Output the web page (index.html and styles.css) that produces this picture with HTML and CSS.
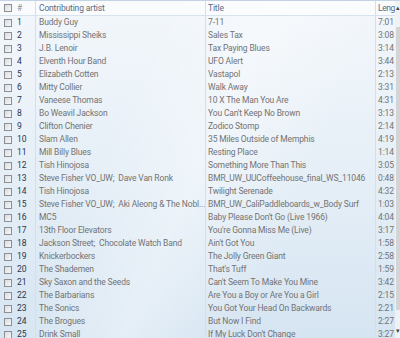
FILE: index.html
```html
<!DOCTYPE html>
<html>
<head>
<meta charset="utf-8">
<link rel="stylesheet" href="styles.css">
</head>
<body>
<div class="pane">
  <div class="list">
    <div class="row head">
      <div class="c-chk"><span class="box"></span></div>
      <div class="c-num">#</div>
      <div class="c-art">Contributing artist</div>
      <div class="c-tit">Title</div>
      <div class="c-len">Leng</div>
    </div>
    <div class="row"><div class="c-chk"><span class="box"></span></div><div class="c-num">1</div><div class="c-art">Buddy Guy</div><div class="c-tit">7-11</div><div class="c-len">7:01</div></div>
    <div class="row"><div class="c-chk"><span class="box"></span></div><div class="c-num">2</div><div class="c-art">Mississippi Sheiks</div><div class="c-tit">Sales Tax</div><div class="c-len">3:08</div></div>
    <div class="row"><div class="c-chk"><span class="box"></span></div><div class="c-num">3</div><div class="c-art">J.B. Lenoir</div><div class="c-tit">Tax Paying Blues</div><div class="c-len">3:14</div></div>
    <div class="row"><div class="c-chk"><span class="box"></span></div><div class="c-num">4</div><div class="c-art">Elventh Hour Band</div><div class="c-tit">UFO Alert</div><div class="c-len">3:44</div></div>
    <div class="row"><div class="c-chk"><span class="box"></span></div><div class="c-num">5</div><div class="c-art">Elizabeth Cotten</div><div class="c-tit">Vastapol</div><div class="c-len">2:13</div></div>
    <div class="row"><div class="c-chk"><span class="box"></span></div><div class="c-num">6</div><div class="c-art">Mitty Collier</div><div class="c-tit">Walk Away</div><div class="c-len">3:31</div></div>
    <div class="row"><div class="c-chk"><span class="box"></span></div><div class="c-num">7</div><div class="c-art">Vaneese Thomas</div><div class="c-tit">10 X The Man You Are</div><div class="c-len">4:31</div></div>
    <div class="row"><div class="c-chk"><span class="box"></span></div><div class="c-num">8</div><div class="c-art">Bo Weavil Jackson</div><div class="c-tit">You Can't Keep No Brown</div><div class="c-len">3:13</div></div>
    <div class="row"><div class="c-chk"><span class="box"></span></div><div class="c-num">9</div><div class="c-art">Clifton Chenier</div><div class="c-tit">Zodico Stomp</div><div class="c-len">2:14</div></div>
    <div class="row"><div class="c-chk"><span class="box"></span></div><div class="c-num">10</div><div class="c-art">Slam Allen</div><div class="c-tit">35 Miles Outside of Memphis</div><div class="c-len">4:19</div></div>
    <div class="row"><div class="c-chk"><span class="box"></span></div><div class="c-num">11</div><div class="c-art">Mill Billy Blues</div><div class="c-tit">Resting Place</div><div class="c-len">1:14</div></div>
    <div class="row"><div class="c-chk"><span class="box"></span></div><div class="c-num">12</div><div class="c-art">Tish Hinojosa</div><div class="c-tit">Something More Than This</div><div class="c-len">3:05</div></div>
    <div class="row"><div class="c-chk"><span class="box"></span></div><div class="c-num">13</div><div class="c-art">Steve Fisher VO_UW;&nbsp; Dave Van Ronk</div><div class="c-tit">BMR_UW_UUCoffeehouse_final_WS_11046</div><div class="c-len">0:48</div></div>
    <div class="row"><div class="c-chk"><span class="box"></span></div><div class="c-num">14</div><div class="c-art">Tish Hinojosa</div><div class="c-tit">Twilight Serenade</div><div class="c-len">4:32</div></div>
    <div class="row"><div class="c-chk"><span class="box"></span></div><div class="c-num">15</div><div class="c-art">Steve Fisher VO_UW;&nbsp; Aki Aleong &amp; The Nobl...</div><div class="c-tit">BMR_UW_CaliPaddleboards_w_Body Surf</div><div class="c-len">1:03</div></div>
    <div class="row"><div class="c-chk"><span class="box"></span></div><div class="c-num">16</div><div class="c-art">MC5</div><div class="c-tit">Baby Please Don't Go (Live 1966)</div><div class="c-len">4:04</div></div>
    <div class="row"><div class="c-chk"><span class="box"></span></div><div class="c-num">17</div><div class="c-art">13th Floor Elevators</div><div class="c-tit">You're Gonna Miss Me (Live)</div><div class="c-len">3:17</div></div>
    <div class="row"><div class="c-chk"><span class="box"></span></div><div class="c-num">18</div><div class="c-art">Jackson Street;&nbsp; Chocolate Watch Band</div><div class="c-tit">Ain't Got You</div><div class="c-len">1:58</div></div>
    <div class="row"><div class="c-chk"><span class="box"></span></div><div class="c-num">19</div><div class="c-art">Knickerbockers</div><div class="c-tit">The Jolly Green Giant</div><div class="c-len">2:58</div></div>
    <div class="row"><div class="c-chk"><span class="box"></span></div><div class="c-num">20</div><div class="c-art">The Shademen</div><div class="c-tit">That's Tuff</div><div class="c-len">1:59</div></div>
    <div class="row"><div class="c-chk"><span class="box"></span></div><div class="c-num">21</div><div class="c-art">Sky Saxon and the Seeds</div><div class="c-tit">Can't Seem To Make You Mine</div><div class="c-len">3:42</div></div>
    <div class="row"><div class="c-chk"><span class="box"></span></div><div class="c-num">22</div><div class="c-art">The Barbarians</div><div class="c-tit">Are You a Boy or Are You a Girl</div><div class="c-len">2:15</div></div>
    <div class="row"><div class="c-chk"><span class="box"></span></div><div class="c-num">23</div><div class="c-art">The Sonics</div><div class="c-tit">You Got Your Head On Backwards</div><div class="c-len">2:21</div></div>
    <div class="row"><div class="c-chk"><span class="box"></span></div><div class="c-num">24</div><div class="c-art">The Brogues</div><div class="c-tit">But Now I Find</div><div class="c-len">2:27</div></div>
    <div class="row"><div class="c-chk"><span class="box"></span></div><div class="c-num">25</div><div class="c-art">Drink Small</div><div class="c-tit">If My Luck Don't Change</div><div class="c-len">3:27</div></div>
  </div>
  <div class="scroll">
    <div class="arrow up">&#9652;</div>
    <div class="thumb"></div>
    <div class="arrow down">&#9662;</div>
  </div>
</div>
</body>
</html>
```
FILE: styles.css
```css
html, body {
  margin: 0;
  padding: 0;
  width: 400px;
  height: 338px;
  overflow: hidden;
}
body {
  font-family: Roboto, "Noto Sans", sans-serif;
  font-size: 8.5px;
  letter-spacing: -0.15px;
  color: #737373;
}
.pane {
  display: flex;
  width: 400px;
  height: 338px;
  border-top: 1px solid #c3d3e3;
  box-sizing: border-box;
  background:
    linear-gradient(115deg, rgba(255,255,255,0) 30%, rgba(255,255,255,0.35) 50%, rgba(255,255,255,0) 70%),
    linear-gradient(to bottom, #f3f7fb 0%, #e6eff7 50%, #d6e5f2 100%);
}
.list {
  width: 395px;
  flex: none;
  display: flex;
  flex-direction: column;
}
.row {
  display: grid;
  grid-template-columns: 14px 21px 170px 170px 20px;
  height: 13px;
  line-height: 13px;
  white-space: nowrap;
  flex: none;
}
.row > div {
  overflow: hidden;
}
.head {
  height: 14px;
  line-height: 14px;
  color: #5a6b82;
  background: rgba(255,255,255,0.5);
  border-bottom: 1px solid #d6e2ee;
}
.c-chk {
  display: flex;
  align-items: center;
  padding-left: 4px;
}
.box {
  width: 6px;
  height: 6px;
  border: 1px solid #8c9096;
  background: linear-gradient(135deg, #d9dcdf, #f6f7f8);
}
.c-num {
  padding-left: 3px;
  color: #26364e;
}
.head .c-num {
  color: #8a96a6;
}
.c-art, .c-tit, .c-len {
  border-left: 1px solid #d3e0ec;
  padding-left: 3px;
}
.c-tit {
  padding-left: 2px;
}
.row .c-len {
  padding-left: 2px;
}
.head .c-len {
  letter-spacing: -0.4px;
}
.scroll {
  flex: 1;
  display: flex;
  flex-direction: column;
  align-items: flex-start;
  background: #eef2f5;
}
.arrow {
  height: 14px;
  line-height: 14px;
  font-size: 7px;
  color: #444;
  padding-left: 1px;
  flex: none;
}
.thumb {
  flex: 1;
  width: 5px;
  margin: 12px 0 14px 1px;
  background: #d2d4d6;
}
```
